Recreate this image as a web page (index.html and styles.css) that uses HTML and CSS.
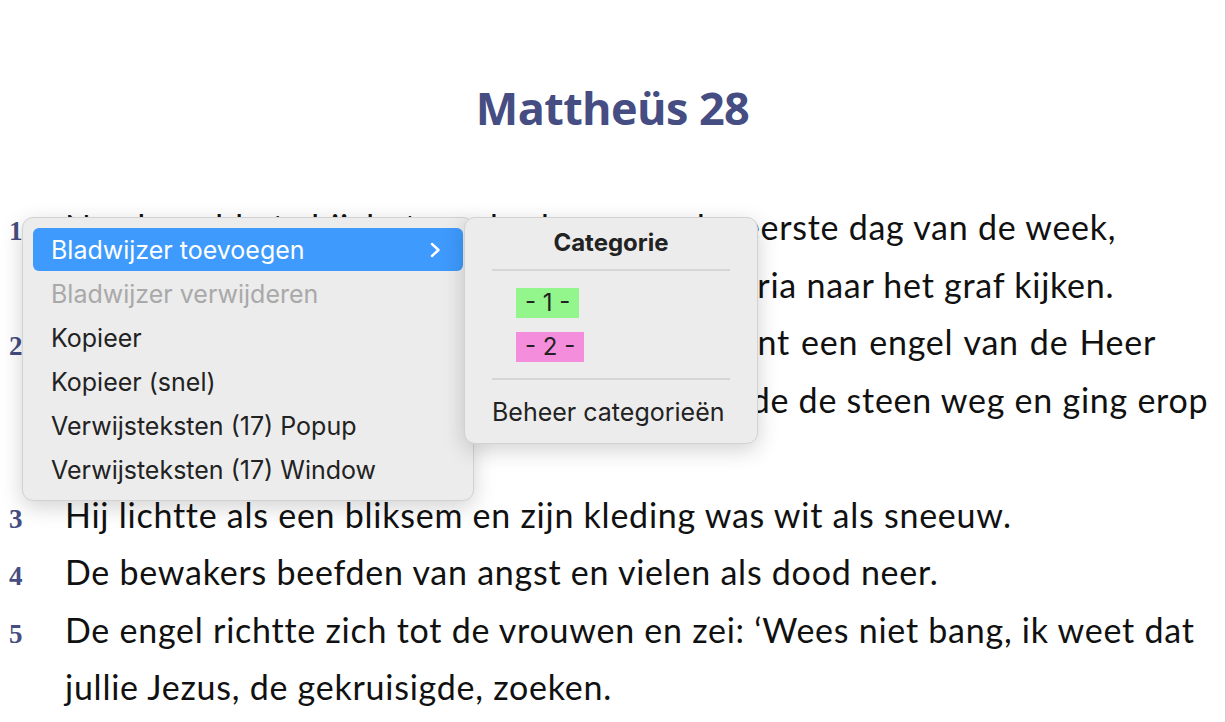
FILE: index.html
```html
<!DOCTYPE html>
<html lang="nl">
<head>
<meta charset="utf-8">
<title>Mattheüs 28</title>
<link rel="stylesheet" href="styles.css">
</head>
<body>
<div class="page">
  <h1 class="title">Mattheüs 28</h1>
  <div class="verses">
    <div class="verse"><span class="num">1</span><p class="txt"><span class="under w1">Na de sabbat, bij het aanbreken van de </span>eerste dag van de week,<br><span class="under w2">gingen Maria van Magdala en de andere </span>Maria naar het graf kijken.</p></div>
    <div class="verse"><span class="num">2</span><p class="txt"><span class="w3">Plotseling was er een hevige aardbeving, want een engel van de Heer</span><br><span class="under w4">daalde uit de hemel; hij ging naar het graf, </span>rolde de steen weg en ging erop<br>zitten.</p></div>
    <div class="verse"><span class="num">3</span><p class="txt">Hij lichtte als een bliksem en zijn kleding was wit als sneeuw.</p></div>
    <div class="verse"><span class="num">4</span><p class="txt">De bewakers beefden van angst en vielen als dood neer.</p></div>
    <div class="verse"><span class="num">5</span><p class="txt">De engel richtte zich tot de vrouwen en zei: ‘Wees niet bang, ik weet dat<br>jullie Jezus, de gekruisigde, zoeken.</p></div>
  </div>

  <div class="menu">
    <div class="item active"><span>Bladwijzer toevoegen</span>
      <svg class="chev" width="12" height="18" viewBox="0 0 12 18"><path d="M3 3 L9.5 9 L3 15" fill="none" stroke="#fff" stroke-width="2.4" stroke-linecap="round" stroke-linejoin="round"/></svg>
    </div>
    <div class="item disabled">Bladwijzer verwijderen</div>
    <div class="item">Kopieer</div>
    <div class="item">Kopieer (snel)</div>
    <div class="item">Verwijsteksten (17) Popup</div>
    <div class="item">Verwijsteksten (17) Window</div>
  </div>

  <div class="submenu">
    <div class="sub-head">Categorie</div>
    <div class="sep"></div>
    <div class="cats">
      <span class="cat green">- 1 -</span>
      <span class="cat pink">- 2 -</span>
    </div>
    <div class="sep"></div>
    <div class="sub-item">Beheer categorieën</div>
  </div>
</div>
</body>
</html>
```
FILE: styles.css
```css
html, body {
  margin: 0;
  padding: 0;
  background: #ffffff;
}
.page {
  position: relative;
  width: 1226px;
  height: 722px;
  box-sizing: border-box;
  border-right: 1px solid #cfcfcf;
  overflow: hidden;
}
.title {
  margin: 0;
  padding-top: 80px;
  height: 103px;
  text-align: center;
  font-family: "Open Sans", sans-serif;
  font-weight: 700;
  font-size: 45px;
  line-height: 56px;
  color: #454d82;
  letter-spacing: -0.6px;
}
.verses {
  padding-top: 15px;
}
.verse {
  display: flex;
  align-items: baseline;
}
.num {
  width: 65px;
  box-sizing: border-box;
  padding-left: 9px;
  font-family: "Liberation Serif", serif;
  font-weight: 700;
  font-size: 27px;
  color: #454d82;
  flex: none;
}
.txt {
  margin: 0;
  font-family: "Lato", sans-serif;
  font-size: 34px;
  letter-spacing: 0.75px;
  line-height: 57.5px;
  color: #111111;
  white-space: nowrap;
}
.w1 { word-spacing: 8px; }
.w2 { word-spacing: 2px; }
.w3 { word-spacing: 1.6px; }
.w4 { word-spacing: -2px; }
.menu {
  position: absolute;
  left: 22px;
  top: 217px;
  width: 452px;
  height: 284px;
  box-sizing: border-box;
  padding: 10px 10px 8px;
  background: #ececec;
  border: 1px solid #d2d2d2;
  border-radius: 11px;
  box-shadow: 0 6px 22px rgba(0,0,0,0.18);
  font-family: "Inter", "Open Sans", sans-serif;
  font-size: 25px;
  color: #222222;
}
.item {
  height: 44px;
  display: flex;
  align-items: center;
  justify-content: space-between;
  padding: 0 22px 0 18px;
  border-radius: 6px;
  white-space: nowrap;
}
.item.active {
  background: #3e9afc;
  color: #ffffff;
  height: 43px;
  margin-bottom: 1px;
}
.item.disabled {
  color: #a9a9a9;
}
.chev {
  display: block;
}
.submenu {
  position: absolute;
  left: 464px;
  top: 217px;
  width: 294px;
  height: 227px;
  box-sizing: border-box;
  padding: 11px 27px 0;
  background: #ececec;
  border: 1px solid #d2d2d2;
  border-radius: 11px;
  box-shadow: 0 6px 22px rgba(0,0,0,0.18);
  font-family: "Inter", "Open Sans", sans-serif;
  font-size: 25px;
  color: #222222;
}
.sub-head {
  text-align: center;
  font-weight: 700;
  font-size: 24px;
  height: 28px;
  line-height: 28px;
}
.sep {
  height: 2px;
  background: #d6d6d6;
  margin: 12px 0 0;
}
.cats {
  display: flex;
  flex-direction: column;
  align-items: flex-start;
  gap: 14px;
  padding: 17px 0 4px 24px;
}
.cat {
  height: 30px;
  line-height: 30px;
  padding: 0 9px;
  font-size: 24px;
}
.cat.green { background: #93f68c; }
.cat.pink { background: #f48ddb; }
.sub-item {
  padding-top: 17px;
  line-height: 30px;
  white-space: nowrap;
}
```
